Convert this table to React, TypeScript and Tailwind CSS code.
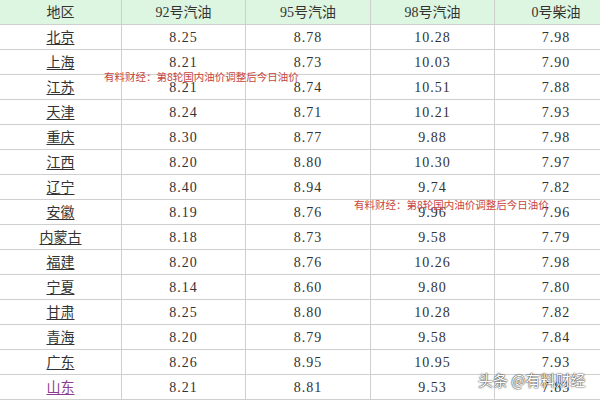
import React from "react";

const rows: [string, string, string, string, string][] = [
  ["北京", "8.25", "8.78", "10.28", "7.98"],
  ["上海", "8.21", "8.73", "10.03", "7.90"],
  ["江苏", "8.21", "8.74", "10.51", "7.88"],
  ["天津", "8.24", "8.71", "10.21", "7.93"],
  ["重庆", "8.30", "8.77", "9.88", "7.98"],
  ["江西", "8.20", "8.80", "10.30", "7.97"],
  ["辽宁", "8.40", "8.94", "9.74", "7.82"],
  ["安徽", "8.19", "8.76", "9.96", "7.96"],
  ["内蒙古", "8.18", "8.73", "9.58", "7.79"],
  ["福建", "8.20", "8.76", "10.26", "7.98"],
  ["宁夏", "8.14", "8.60", "9.80", "7.80"],
  ["甘肃", "8.25", "8.80", "10.28", "7.82"],
  ["青海", "8.20", "8.79", "9.58", "7.84"],
  ["广东", "8.26", "8.95", "10.95", "7.93"],
  ["山东", "8.21", "8.81", "9.53", "7.83"],
];

const headers = ["地区", "92号汽油", "95号汽油", "98号汽油", "0号柴油"];

const cell =
  "flex items-center justify-center border-r border-b border-[#cfcfcf] text-[#333]";

export default function App() {
  return (
    <div
      className="relative w-[600px] h-[400px] overflow-hidden bg-white"
      style={{ fontFamily: '"Liberation Serif", "Noto Sans CJK SC", serif' }}
    >
      <div className="grid w-[618px] grid-cols-[122px_124px_125px_124px_123px] grid-rows-[25px] auto-rows-[25px]">
        {headers.map((h) => (
          <div key={h} className={`${cell} bg-[#ddf6e1] text-[14px] text-[#222]`}>
            {h}
          </div>
        ))}
        {rows.map((r, i) => (
          <React.Fragment key={r[0]}>
            <div className={`${cell} text-[14px]`}>
              <span
                className={`underline underline-offset-2 ${
                  i === rows.length - 1 ? "text-[#8a3d8f]" : "text-[#333]"
                }`}
              >
                {r[0]}
              </span>
            </div>
            {r.slice(1).map((v, j) => (
              <div key={j} className={`${cell} text-[14px] tracking-[1px]`}>
                {v}
              </div>
            ))}
          </React.Fragment>
        ))}
      </div>

      <div
        className="absolute left-[104px] top-[71px] text-[10.5px] leading-[12px] text-[#c8463c] whitespace-nowrap"
        style={{ fontFamily: '"Noto Sans CJK SC", sans-serif' }}
      >
        有料财经：第8轮国内油价调整后今日油价
      </div>
      <div
        className="absolute left-[354px] top-[199px] text-[10.5px] leading-[12px] text-[#c8463c] whitespace-nowrap"
        style={{ fontFamily: '"Noto Sans CJK SC", sans-serif' }}
      >
        有料财经：第8轮国内油价调整后今日油价
      </div>
      <div
        className="absolute left-[478px] top-[371px] text-[15px] leading-[18px] text-white whitespace-nowrap [text-shadow:0_0_2px_rgba(0,0,0,0.8),0_0_1px_rgba(0,0,0,0.9)]"
        style={{ fontFamily: '"Noto Sans CJK SC", sans-serif' }}
      >
        头条 @有料财经
      </div>
    </div>
  );
}
